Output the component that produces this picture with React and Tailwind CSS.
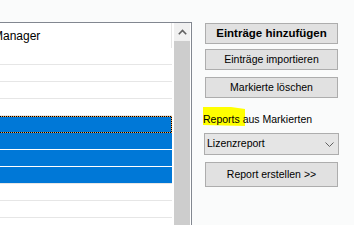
const rows = [0, 1, 2, 3, 4, 5, 6, 7, 8, 9, 10];
const selected = [4, 5, 6, 7];

function ListRow({ index }) {
  const isSel = selected.includes(index);
  const lastSel = index === selected[selected.length - 1];
  return (
    <div
      className={
        'relative h-[17px] shrink-0 border-b ' +
        (isSel ? 'bg-[#0078d7] ' : 'bg-white ') +
        (isSel && !lastSel ? 'border-white' : 'border-[#e6e6e6]')
      }
    >
      {index === selected[0] && (
        <>
          <div className="absolute -left-[3px] right-0 top-0 h-[17px] border border-black" />
          <div className="absolute -left-[3px] right-0 top-0 h-[17px] border border-dotted border-[#f5a44c]" />
        </>
      )}
    </div>
  );
}

function Button({ children, className, bold }) {
  return (
    <div
      className={
        'ml-[2px] flex w-[133px] shrink-0 items-center justify-center border border-[#adadad] bg-[#e1e1e1] ' +
        (bold ? 'text-[11.5px] font-bold ' : 'text-[10.5px] ') +
        className
      }
    >
      {children}
    </div>
  );
}

export default function App() {
  return (
    <div className="flex h-[225px] w-[354px] overflow-hidden bg-[#fafbfb] font-['Liberation_Sans',Arial,sans-serif] text-black">
      {/* list view, left edge is outside the window */}
      <div className="mt-[22px] flex h-[210px] w-[192px] shrink-0 overflow-hidden border-t border-r border-[#828790] bg-white">
        <div className="flex w-[172px] flex-col">
          <div className="flex h-[25px] shrink-0 items-center border-r border-[#e5e5e5] text-[12px]">
            <span className="-ml-[7px]">Manager</span>
          </div>
          {rows.map((i) => (
            <ListRow key={i} index={i} />
          ))}
        </div>
        <div className="w-[2px]" />
        <div className="flex w-[16px] flex-col bg-[#f0f0f0]">
          <div className="flex h-[18px] shrink-0 items-center justify-center">
            <svg width="9" height="6" viewBox="0 0 9 6">
              <polyline points="0.8,5.2 4.5,1.5 8.2,5.2" fill="none" stroke="#606060" strokeWidth="1.6" />
            </svg>
          </div>
          <div className="flex-1 bg-[#cdcdcd]" />
        </div>
      </div>

      {/* right column */}
      <div className="ml-[11px] mt-[23px] flex flex-col">
        <Button bold className="h-[21px]">Einträge hinzufügen</Button>
        <Button className="mt-[5px] h-[21px]">Einträge importieren</Button>
        <Button className="mt-[7px] h-[21px]">Markierte löschen</Button>

        <div className="relative mt-[15px] h-[13px] text-[10.5px] leading-[13px]">
          <svg className="absolute -top-[6px] left-0" width="44" height="20" viewBox="0 0 44 20">
            <polygon points="0,0 28,0 42,2 42,19 0,18" fill="#ffff00" />
          </svg>
          <span className="relative">Reports aus Markierten</span>
        </div>

        <div className="ml-[1px] mt-[7px] flex h-[22px] w-[135px] items-center justify-between border border-[#adadad] bg-[#e5e5e5] pl-[2px] pr-[4px] text-[10.5px]">
          <span>Lizenzreport</span>
          <svg width="9" height="5" viewBox="0 0 9 5">
            <polyline points="0.5,0.5 4.5,4.5 8.5,0.5" fill="none" stroke="#606060" strokeWidth="1" />
          </svg>
        </div>

        <Button className="mt-[7px] h-[25px]">Report erstellen &gt;&gt;</Button>
      </div>
    </div>
  );
}
